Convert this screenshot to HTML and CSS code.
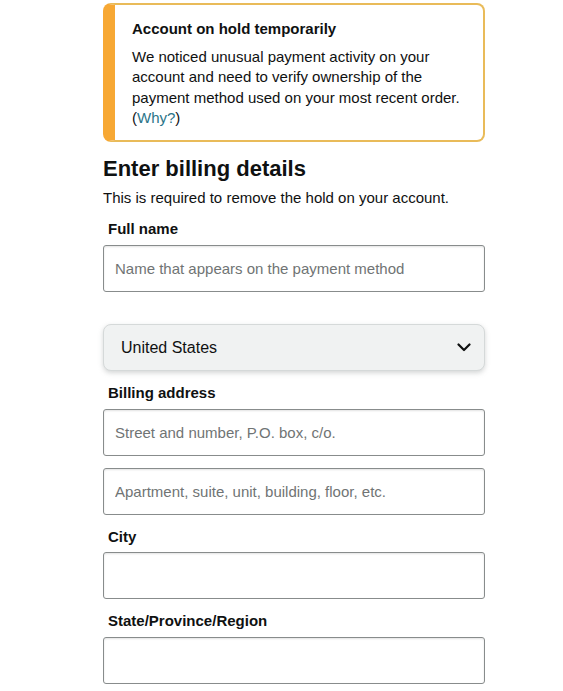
FILE: index.html
```html
<!DOCTYPE html>
<html lang="en">
<head>
<meta charset="utf-8">
<title>Billing details</title>
<link rel="stylesheet" href="styles.css">
</head>
<body>
<div class="page">
  <div class="alert">
    <h4 class="alert-title">Account on hold temporarily</h4>
    <p class="alert-text">We noticed unusual payment activity on your account and need to verify ownership of the payment method used on your most recent order. <span class="nowrap">(<a class="link" href="#">Why?</a>)</span></p>
  </div>

  <h1 class="heading">Enter billing details</h1>
  <p class="sub">This is required to remove the hold on your account.</p>

  <label class="label">Full name</label>
  <input class="field" type="text" placeholder="Name that appears on the payment method">

  <div class="select">
    <span class="select-text">United States</span>
    <svg class="chev" width="14" height="9" viewBox="0 0 14 9"><path d="M1.5 1.5 L7 7 L12.5 1.5" fill="none" stroke="#0f1111" stroke-width="2.2" stroke-linecap="round" stroke-linejoin="round"/></svg>
  </div>

  <label class="label label-gap">Billing address</label>
  <input class="field" type="text" placeholder="Street and number, P.O. box, c/o.">
  <input class="field field-gap" type="text" placeholder="Apartment, suite, unit, building, floor, etc.">

  <label class="label label-gap">City</label>
  <input class="field field-city" type="text">

  <label class="label label-gap">State/Province/Region</label>
  <input class="field" type="text">
</div>
</body>
</html>
```

FILE: styles.css
```css
html, body {
  margin: 0;
  padding: 0;
  background: #ffffff;
}
body {
  font-family: "Liberation Sans", Arial, sans-serif;
  color: #0f1111;
}
.page {
  margin-left: 103px;
  width: 382px;
  padding-top: 3px;
  display: flex;
  flex-direction: column;
}
.alert {
  box-sizing: border-box;
  height: 139px;
  border: 2px solid #e9bb59;
  border-left: 12px solid #f7a834;
  border-radius: 8px;
  padding: 14px 14px 0 17px;
}
.alert-title {
  margin: 0;
  font-size: 15px;
  font-weight: bold;
  line-height: 20px;
}
.alert-text {
  margin: 8px 0 0;
  font-size: 15px;
  line-height: 20.4px;
}
.nowrap {
  white-space: nowrap;
}
.link {
  color: #2b7589;
  text-decoration: none;
}
.heading {
  margin: 13px 0 0;
  font-size: 22px;
  line-height: 28px;
  font-weight: bold;
}
.sub {
  margin: 5px 0 0;
  font-size: 15px;
  line-height: 20px;
}
.label {
  display: block;
  margin: 11px 0 0 5px;
  font-size: 15px;
  font-weight: bold;
  line-height: 20px;
}
.label-gap {
  margin-top: 12px;
}
.field {
  box-sizing: border-box;
  display: block;
  width: 382px;
  height: 47px;
  margin: 6px 0 0;
  padding: 0 11px;
  border: 1px solid #888c8c;
  border-radius: 3px;
  box-shadow: inset 0 1px 2px rgba(15, 17, 17, 0.12);
  font-family: "Liberation Sans", Arial, sans-serif;
  font-size: 15px;
  color: #0f1111;
  background: #fff;
  outline: none;
}
.field::placeholder {
  color: #707474;
}
.field-gap {
  margin-top: 12px;
}
.field-city {
  margin-top: 5px;
}
.select {
  box-sizing: border-box;
  height: 47px;
  margin-top: 32px;
  padding: 0 13px 0 17px;
  display: flex;
  align-items: center;
  justify-content: space-between;
  background: #f0f2f2;
  border: 1px solid #d5d9d9;
  border-radius: 8px;
  box-shadow: 0 2px 5px rgba(160, 165, 165, 0.45);
}
.select-text {
  font-size: 16px;
}
.chev {
  display: block;
}
```
